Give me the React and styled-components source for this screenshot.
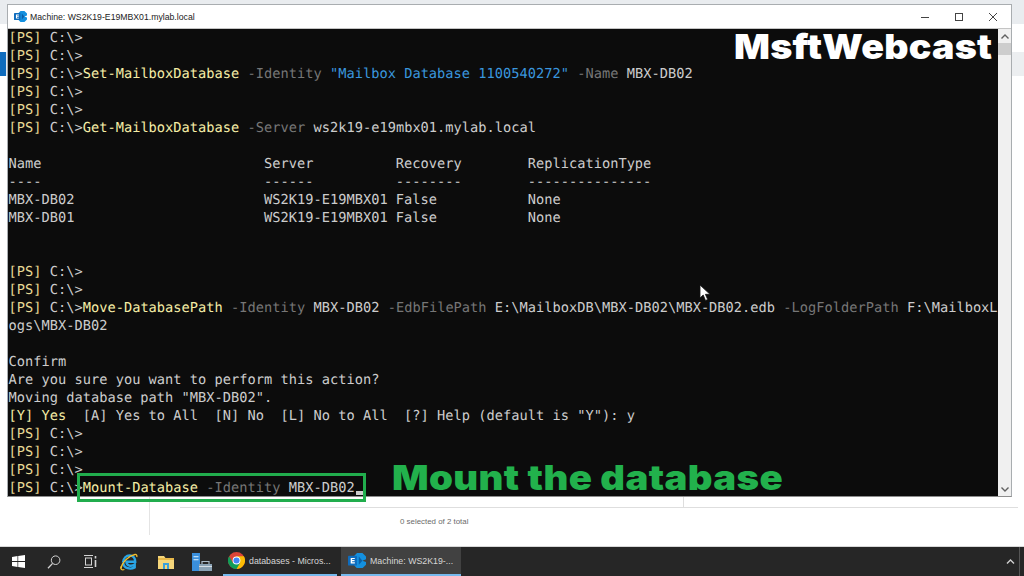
import React from 'react';
import styled, { createGlobalStyle } from 'styled-components';

const GlobalStyle = createGlobalStyle`
  html, body {
    margin: 0;
    padding: 0;
    background: #fff;
    overflow: hidden;
  }
`;

const TONES = {
  text: '#cccccc',
  prompt: '#e6d893',
  command: '#f5eda6',
  param: '#767676',
  string: '#3a96dd'
};

const Desktop = styled.div`
  position: relative;
  width: 1024px;
  height: 576px;
  display: flex;
  flex-direction: column;
  overflow: hidden;
  font-family: 'Liberation Sans', sans-serif;
`;

/* the browser page behind the remote window */
const Browser = styled.div`
  flex: 1;
  display: flex;
  flex-direction: column;
  background: #fff;
`;

const TopBand = styled.div`
  height: 24px;
  background: #e9ecef;
`;

const NavBand = styled.div`
  margin-top: 28px;
  height: 24px;
  background: #eceef0;
`;

const BlueMark = styled.div`
  width: 6px;
  height: 100%;
  background: #0f6cbd;
`;

const PageFoot = styled.div`
  margin-top: auto;
  height: 50px;
  display: flex;
`;

const SideColumn = styled.div`
  width: 149px;
  height: 39px;
  border-right: 1px solid #e4e4e4;
`;

const TableFoot = styled.div`
  margin-left: 30px;
  width: 838px;
`;

const TableRule = styled.div`
  height: 11px;
  margin-bottom: 8px;
  border-bottom: 1px solid #dedede;
  display: flex;
`;

const RuleTick = styled.div`
  width: 503px;
  border-right: 1px solid #dedede;
`;

const SelectedCount = styled.div`
  padding-left: 220px;
  font-size: 7.9px;
  line-height: 12px;
  color: #6b6b6b;
`;

const Window = styled.div`
  position: absolute;
  left: 7px;
  top: 4px;
  width: 1003px;
  height: 491px;
  border: 1px solid #a9adb0;
  border-bottom-color: #8d8d8d;
  background: #fff;
  display: flex;
  flex-direction: column;
`;

const TitleBar = styled.div`
  height: 23px;
  display: flex;
  align-items: center;
  padding-left: 6px;
  background: #fff;
`;

const TitleText = styled.span`
  margin-left: 3px;
  flex: 1;
  font-size: 8.7px;
  color: #222;
`;

const WindowButton = styled.div`
  width: 34px;
  height: 23px;
  display: flex;
  align-items: center;
  justify-content: center;
  margin-right: ${({ $last }) => ($last ? '1px' : '0')};
`;

const Body = styled.div`
  flex: 1;
  display: flex;
  min-height: 0;
  border-top: 1px solid #c4c4c4;
`;

const Terminal = styled.div`
  flex: 1;
  padding-left: 0.5px;
  background: #0c0c0c;
  overflow: hidden;
`;

const Line = styled.div`
  height: 18px;
  line-height: 18px;
  white-space: pre;
  font-family: 'DejaVu Sans Mono', monospace;
  font-size: 13.67px;
  letter-spacing: 0.02px;
  text-rendering: geometricPrecision;
  color: ${TONES.text};
`;

const Token = styled.span`
  color: ${({ $tone }) => TONES[$tone]};
`;

const Caret = styled.span`
  display: inline-block;
  width: 8px;
  height: 4px;
  margin-left: 1px;
  vertical-align: -3px;
  background: #cccccc;
`;

const Scrollbar = styled.div`
  width: 13px;
  background: #f0f0f0;
  display: flex;
  flex-direction: column;
  align-items: center;
`;

const ScrollArrow = styled.div`
  height: 14px;
  display: flex;
  align-items: center;
  justify-content: center;
`;

const ScrollThumb = styled.div`
  width: 100%;
  height: 12px;
  background: #cdcdcd;
`;

const ScrollSpace = styled.div`
  flex: 1;
`;

const Watermark = styled.div`
  position: absolute;
  left: 734px;
  top: 26px;
  font-family: Inter, sans-serif;
  font-weight: 900;
  font-size: 34.5px;
  line-height: 42px;
  letter-spacing: 0.2px;
  color: #fff;
  transform: scaleX(1.09);
  transform-origin: left center;
`;

const Callout = styled.div`
  position: absolute;
  left: 392px;
  top: 456px;
  font-family: Inter, sans-serif;
  font-weight: 900;
  font-size: 34.5px;
  line-height: 44px;
  letter-spacing: 0.35px;
  color: #22b14c;
  transform: scaleX(1.11);
  transform-origin: left center;
`;

const Highlight = styled.div`
  position: absolute;
  left: 77px;
  top: 473px;
  width: 283px;
  height: 23px;
  border: 3px solid #21ad4d;
`;

const Pointer = styled.svg`
  position: absolute;
  left: 699px;
  top: 284px;
`;

const Taskbar = styled.div`
  height: 30px;
  display: flex;
  align-items: stretch;
  background: #262626;
  border-top: 1px solid #d8d8d8;
  box-sizing: border-box;
`;

const TaskIcon = styled.div`
  width: ${({ $wide }) => ($wide ? '37px' : '36px')};
  margin-left: ${({ $gap }) => ($gap ? '2px' : '0')};
  display: flex;
  align-items: center;
  justify-content: center;
`;

const TaskButton = styled.div`
  width: ${({ $active }) => ($active ? '120px' : '114px')};
  margin-left: ${({ $active }) => ($active ? '4px' : '3px')};
  padding-left: ${({ $active }) => ($active ? '7px' : '5px')};
  box-sizing: border-box;
  display: flex;
  align-items: center;
  gap: 4px;
  background: ${({ $active }) => ($active ? '#414141' : 'transparent')};
  border-bottom: 2px solid #76b9ed;

  svg {
    flex-shrink: 0;
  }
`;

const TaskLabel = styled.span`
  font-size: 8.8px;
  white-space: nowrap;
  color: #d6d6d6;
`;

const Tray = styled.div`
  margin-left: auto;
  display: flex;
  align-items: center;
`;

const ShowDesktop = styled.div`
  width: 1px;
  height: 100%;
  margin: 0 4px 0 4px;
  background: #555;
`;

const PS = () => (
  <>
    <Token $tone="prompt">[PS]</Token> C:\&gt;
  </>
);

const promptLine = <PS />;

const TERMINAL_LINES = [
  promptLine,
  promptLine,
  <>
    <PS />
    <Token $tone="command">Set-MailboxDatabase</Token> <Token $tone="param">-Identity</Token>{' '}
    <Token $tone="string">"Mailbox Database 1100540272"</Token> <Token $tone="param">-Name</Token> MBX-DB02
  </>,
  promptLine,
  promptLine,
  <>
    <PS />
    <Token $tone="command">Get-MailboxDatabase</Token> <Token $tone="param">-Server</Token> ws2k19-e19mbx01.mylab.local
  </>,
  '',
  'Name                           Server          Recovery        ReplicationType',
  '----                           ------          --------        ---------------',
  'MBX-DB02                       WS2K19-E19MBX01 False           None',
  'MBX-DB01                       WS2K19-E19MBX01 False           None',
  '',
  '',
  promptLine,
  promptLine,
  <>
    <PS />
    <Token $tone="command">Move-DatabasePath</Token> <Token $tone="param">-Identity</Token> MBX-DB02{' '}
    <Token $tone="param">-EdbFilePath</Token> E:\MailboxDB\MBX-DB02\MBX-DB02.edb{' '}
    <Token $tone="param">-LogFolderPath</Token> F:\MailboxL
  </>,
  'ogs\\MBX-DB02',
  '',
  'Confirm',
  'Are you sure you want to perform this action?',
  'Moving database path "MBX-DB02".',
  <>
    <Token $tone="command">[Y] Yes</Token>
    {'  [A] Yes to All  [N] No  [L] No to All  [?] Help (default is "Y"): y'}
  </>,
  promptLine,
  promptLine,
  promptLine,
  <>
    <PS />
    <Token $tone="command">Mount-Database</Token> <Token $tone="param">-Identity</Token> MBX-DB02
    <Caret />
  </>
];

const ExchangeIcon = ({ size = 13 }) => (
  <svg width={size} height={size * 0.85} viewBox="0 0 20 17">
    <path d="M10 0h6l4 4v3l-4 1.5L20 10v3l-4 4h-6l-3-3V3z" fill="#1490df" />
    <path d="M12 4l4 4.5L12 13z" fill="#0a5fa8" />
    <rect x="0" y="3" width="10" height="11" rx="1" fill="#0f6cbd" />
    <path d="M3 5.5h4.5v1.3H4.6v1.1h2.7v1.3H4.6v1.2h3v1.3H3z" fill="#fff" />
  </svg>
);

const WindowsLogo = () => (
  <svg width="13" height="13" viewBox="0 0 13 13" fill="#fff">
    <path d="M0 1.9L5.5 1.1v5H0zM6.2 1L13 0v6.1H6.2zM0 6.9h5.5v5L0 11.1zM6.2 6.9H13V13l-6.8-1z" />
  </svg>
);

const SearchGlyph = () => (
  <svg width="14" height="14" viewBox="0 0 14 14" fill="none" stroke="#d4d4d4" strokeWidth="1">
    <circle cx="8.6" cy="5.2" r="4.3" />
    <path d="M5.6 8.4L1 13.2" strokeWidth="1.3" />
  </svg>
);

const TaskViewGlyph = () => (
  <svg width="13" height="13" viewBox="0 0 13 13" fill="none" stroke="#d4d4d4" strokeWidth="1">
    <path d="M0 .5h9M0 12.5h9" />
    <rect x="1.5" y="3" width="6" height="7" />
    <path d="M11.5 1v2.5M11.5 5v7" strokeWidth="1.6" />
  </svg>
);

const EdgeGlyph = () => (
  <svg width="18" height="18" viewBox="0 0 18 18" fill="none">
    <path
      d="M3 9.5C3.4 5 6.4 2.5 9.6 2.5c3.6 0 5.6 2.7 5.6 6.2H6.4c.2 4.3 5 5.2 8.3 2.7v3c-4 2.3-11 1.4-11.5-4.6"
      stroke="#2aa5e6"
      strokeWidth="2.4"
    />
    <path d="M1 15.5C2 9 9 2.5 15 1.5c1.5-.2 2.2.8 1.8 2.5" stroke="#f3c02f" strokeWidth="1.3" />
    <path d="M1 13.5c-.6 2.6.6 4 3.4 3" stroke="#f3c02f" strokeWidth="1.3" />
  </svg>
);

const FolderGlyph = () => (
  <svg width="16" height="14" viewBox="0 0 16 14">
    <path d="M0 1h6l1.5 2H16v11H0z" fill="#f5d67b" />
    <rect x="0" y="3" width="16" height="2" fill="#e8b94a" />
    <rect x="5" y="8" width="6" height="6" fill="#3aa0dc" />
    <rect x="7" y="10" width="2" height="4" fill="#f5d67b" />
  </svg>
);

const ServerGlyph = () => (
  <svg width="20" height="18" viewBox="0 0 20 18">
    <rect x="0" y="0" width="8" height="18" fill="#3a8fdc" />
    <rect x="1.5" y="3" width="5" height="1.3" fill="#b9dcf7" />
    <rect x="1.5" y="6" width="5" height="1.3" fill="#b9dcf7" />
    <path d="M7 11h13v7H7z" fill="#8aa2b4" />
    <path d="M10 11V8.5h7V11" fill="none" stroke="#a9bac7" strokeWidth="1.2" />
    <rect x="7" y="13" width="13" height="1" fill="#d4dde4" />
  </svg>
);

const ChromeGlyph = () => (
  <svg width="17" height="17" viewBox="0 0 48 48">
    <circle cx="24" cy="24" r="24" fill="#db4437" />
    <path d="M24 48a24 24 0 0 0 20.8-36H24z" fill="#fbbc05" />
    <path d="M3.2 12A24 24 0 0 0 24 48l10.4-18H13.6z" fill="#0f9d58" />
    <circle cx="24" cy="24" r="11" fill="#fff" />
    <circle cx="24" cy="24" r="8.6" fill="#4285f4" />
  </svg>
);

const Chevron = ({ up, color = '#606060', width = 8 }) => (
  <svg width={width} height="5" viewBox="0 0 8 5" fill="none" stroke={color} strokeWidth="1.4">
    <path d={up ? 'M.5 4.5L4 1l3.5 3.5' : 'M.5.5L4 4 7.5.5'} />
  </svg>
);

export default function App() {
  return (
    <>
      <GlobalStyle />
      <Desktop>
        <Browser>
          <TopBand />
          <NavBand>
            <BlueMark />
          </NavBand>
          <PageFoot>
            <SideColumn />
            <TableFoot>
              <TableRule>
                <RuleTick />
              </TableRule>
              <SelectedCount>0 selected of 2 total</SelectedCount>
            </TableFoot>
          </PageFoot>
        </Browser>

        <Taskbar>
          <TaskIcon>
            <WindowsLogo />
          </TaskIcon>
          <TaskIcon>
            <SearchGlyph />
          </TaskIcon>
          <TaskIcon>
            <TaskViewGlyph />
          </TaskIcon>
          <TaskIcon $wide $gap>
            <EdgeGlyph />
          </TaskIcon>
          <TaskIcon $wide>
            <FolderGlyph />
          </TaskIcon>
          <TaskIcon>
            <ServerGlyph />
          </TaskIcon>
          <TaskButton>
            <ChromeGlyph />
            <TaskLabel>databases - Micros...</TaskLabel>
          </TaskButton>
          <TaskButton $active>
            <ExchangeIcon size={18} />
            <TaskLabel>Machine: WS2K19-...</TaskLabel>
          </TaskButton>
          <Tray>
            <Chevron up color="#d0d0d0" width={9} />
            <ShowDesktop />
          </Tray>
        </Taskbar>

        <Window>
          <TitleBar>
            <ExchangeIcon />
            <TitleText>Machine: WS2K19-E19MBX01.mylab.local</TitleText>
            <WindowButton>
              <svg width="10" height="10" viewBox="0 0 10 10" stroke="#444" fill="none">
                <path d="M1 5.5h8" />
              </svg>
            </WindowButton>
            <WindowButton>
              <svg width="10" height="10" viewBox="0 0 10 10" stroke="#444" fill="none">
                <rect x="1.5" y="1.5" width="7" height="7" />
              </svg>
            </WindowButton>
            <WindowButton $last>
              <svg width="10" height="10" viewBox="0 0 10 10" stroke="#444" fill="none">
                <path d="M1 1l8 8M9 1L1 9" />
              </svg>
            </WindowButton>
          </TitleBar>
          <Body>
            <Terminal>
              {TERMINAL_LINES.map((content, index) => (
                <Line key={index}>{content}</Line>
              ))}
            </Terminal>
            <Scrollbar>
              <ScrollArrow>
                <Chevron up />
              </ScrollArrow>
              <ScrollThumb />
              <ScrollSpace />
              <ScrollArrow>
                <Chevron />
              </ScrollArrow>
            </Scrollbar>
          </Body>
        </Window>

        <Watermark>MsftWebcast</Watermark>
        <Callout>Mount the database</Callout>
        <Highlight />
        <Pointer width="13" height="18" viewBox="0 0 13 18">
          <path d="M1 1v13l3.2-3 2.3 5.5 2.2-1-2.3-5.2H11z" fill="#fff" stroke="#111" strokeWidth="0.8" />
        </Pointer>
      </Desktop>
    </>
  );
}
